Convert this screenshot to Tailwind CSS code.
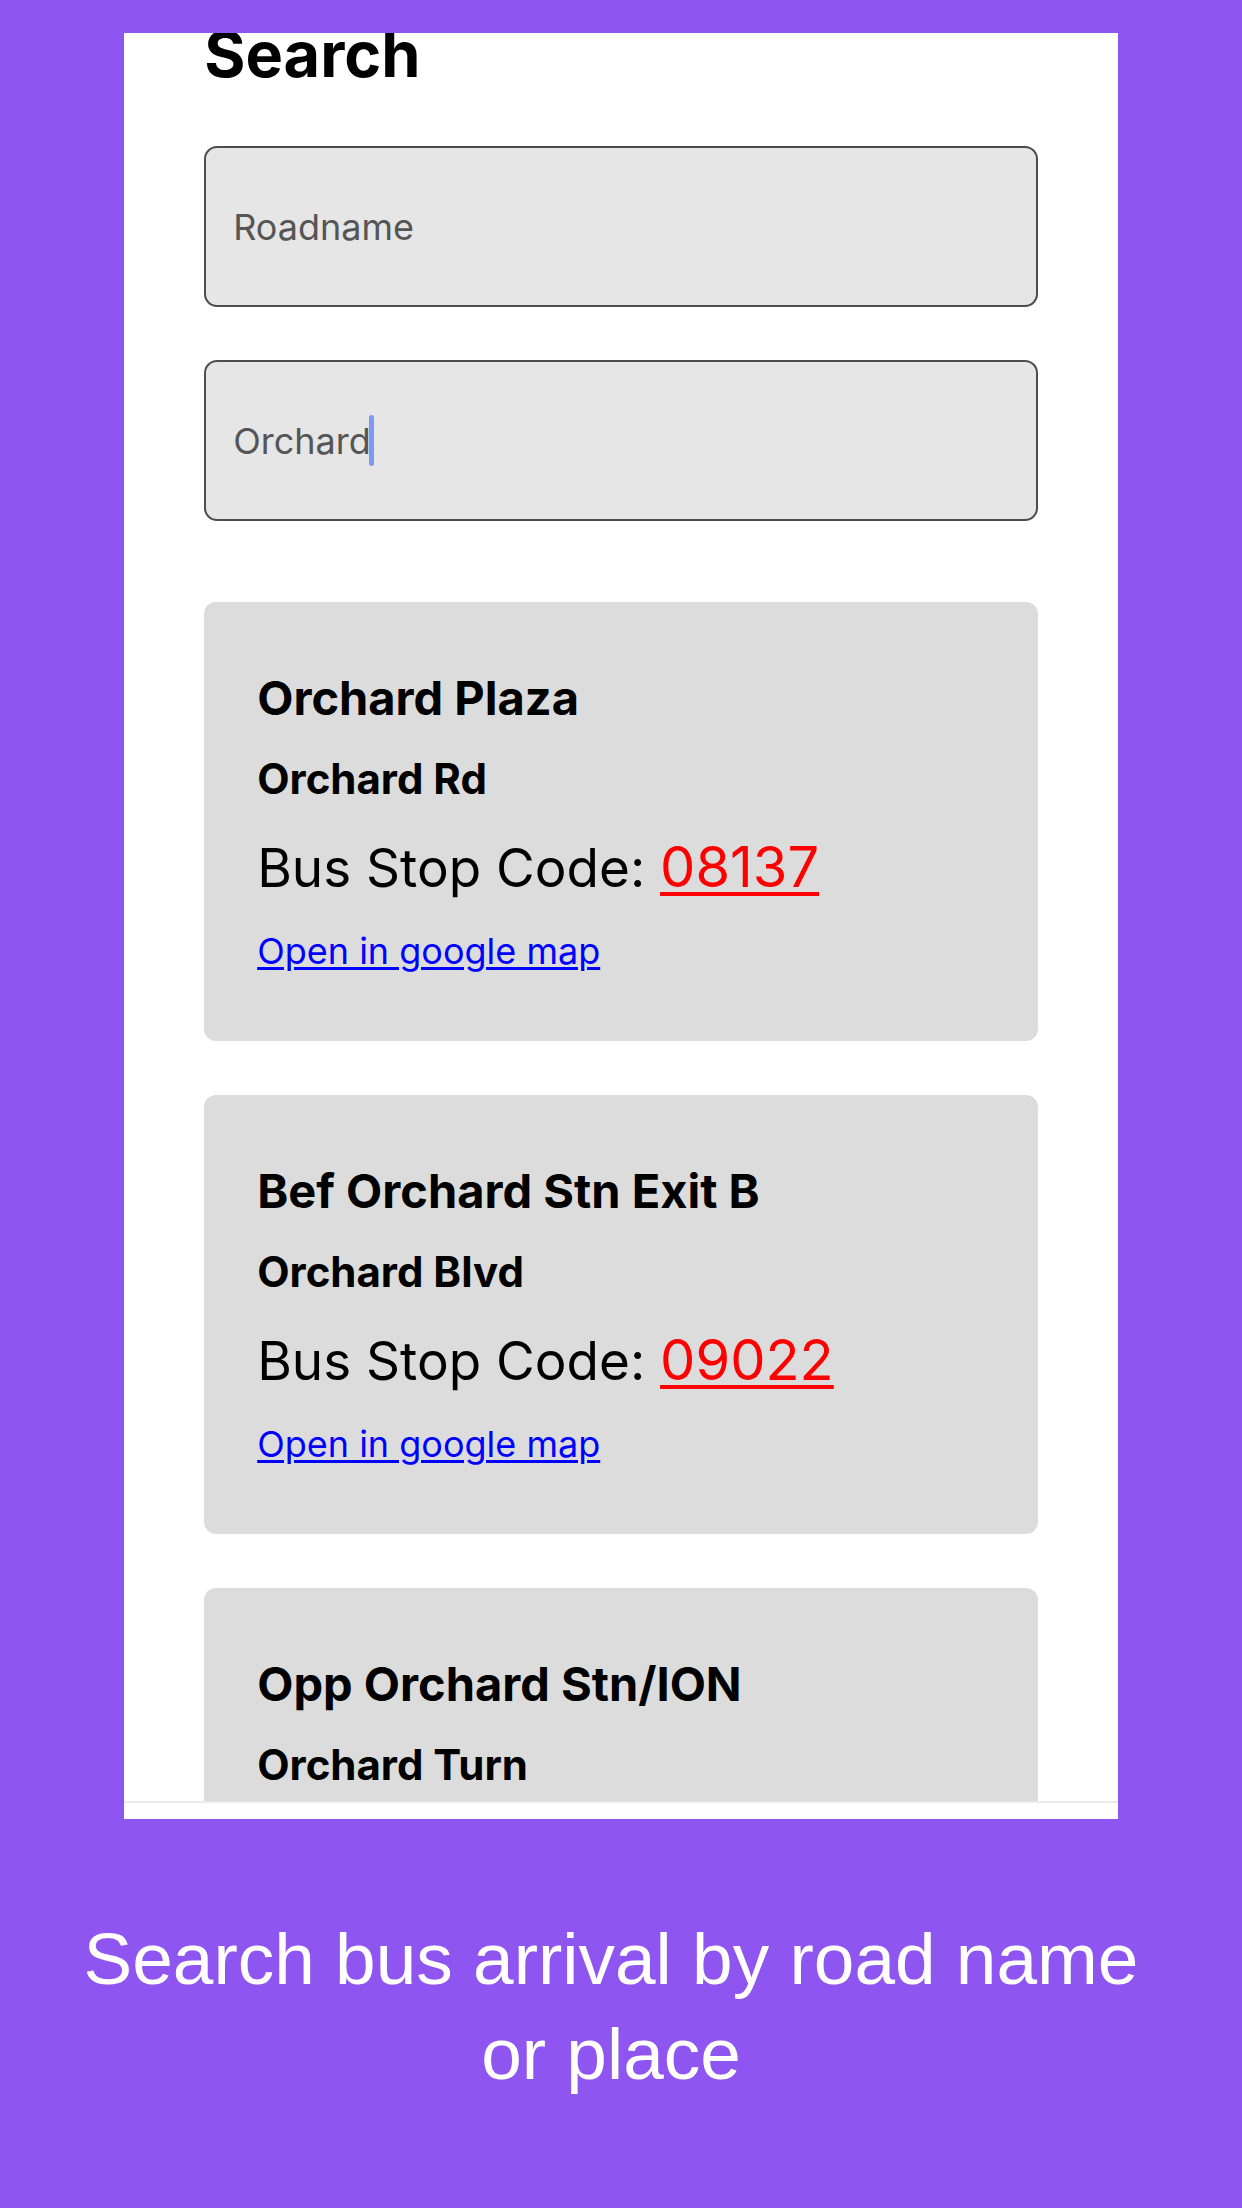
<!DOCTYPE html>
<html lang="en">
<head>
<meta charset="utf-8">
<meta name="viewport" content="width=device-width, initial-scale=1">
<title>Search bus arrival</title>
<script src="https://cdn.jsdelivr.net/npm/@tailwindcss/browser@4"></script>
</head>
<body class="flex h-screen flex-col overflow-hidden bg-[#8e55f0] pt-[33px] font-['Inter',sans-serif] text-black">
  <main class="mx-[10%] flex min-h-0 flex-1 flex-col bg-white pb-4">
    <div class="min-h-0 flex-1 overflow-hidden border-b-2 border-[#ebebeb] px-20">
      <h1 class="text-[63px] leading-[42px] font-bold">Search</h1>

      <form class="mt-[71px] flex flex-col gap-[53px]">
        <input type="text" aria-label="Roadname" placeholder="Roadname" class="h-[161px] w-full rounded-[13px] border-2 border-[#4d4d4d] bg-[#e6e6e6] px-[27px] text-4xl text-[#555] outline-none placeholder:text-[#555]">
        <div class="relative">
          <input type="text" aria-label="Place" value="Orchard" class="block h-[161px] w-full rounded-[13px] border-2 border-[#4d4d4d] bg-[#e6e6e6] px-[27px] text-4xl text-[#555] outline-none">
          <!-- text cursor -->
          <span class="absolute top-[55px] left-[165px] h-[51px] w-[5px] rounded-full bg-[#7f98f2]"></span>
        </div>
      </form>

      <section aria-label="Results" class="mt-[81px] flex flex-col gap-[54px]">
        <article class="flex flex-col items-start gap-7 rounded-xl bg-[#dcdcdc] px-[53px] pt-[67px] pb-[71px]">
          <h2 class="text-[47px] leading-[58px] font-bold">Orchard Plaza</h2>
          <h3 class="text-[42px] leading-[48px] font-bold">Orchard Rd</h3>
          <p class="text-[53px] leading-[72px]">Bus Stop Code: <a href="#08137" class="text-[56px] text-[#ff0000] underline decoration-4 underline-offset-[5px]">08137</a></p>
          <a href="#map-08137" class="text-4xl leading-[38px] text-[#0000ff] underline decoration-3 underline-offset-[3px]">Open in google map</a>
        </article>

        <article class="flex flex-col items-start gap-7 rounded-xl bg-[#dcdcdc] px-[53px] pt-[67px] pb-[71px]">
          <h2 class="text-[47px] leading-[58px] font-bold">Bef Orchard Stn Exit B</h2>
          <h3 class="text-[42px] leading-[48px] font-bold">Orchard Blvd</h3>
          <p class="text-[53px] leading-[72px]">Bus Stop Code: <a href="#09022" class="text-[56px] text-[#ff0000] underline decoration-4 underline-offset-[5px]">09022</a></p>
          <a href="#map-09022" class="text-4xl leading-[38px] text-[#0000ff] underline decoration-3 underline-offset-[3px]">Open in google map</a>
        </article>

        <article class="flex flex-col items-start gap-7 rounded-xl bg-[#dcdcdc] px-[53px] pt-[67px] pb-[71px]">
          <h2 class="text-[47px] leading-[58px] font-bold">Opp Orchard Stn/ION</h2>
          <h3 class="text-[42px] leading-[48px] font-bold">Orchard Turn</h3>
        </article>
      </section>
    </div>
  </main>

  <p class="shrink-0 pt-[92px] pr-20 pb-[107px] pl-[60px] text-center font-['Liberation_Sans',sans-serif] text-[73px] leading-[95px] text-white">Search bus arrival by road name or place</p>
</body>
</html>
